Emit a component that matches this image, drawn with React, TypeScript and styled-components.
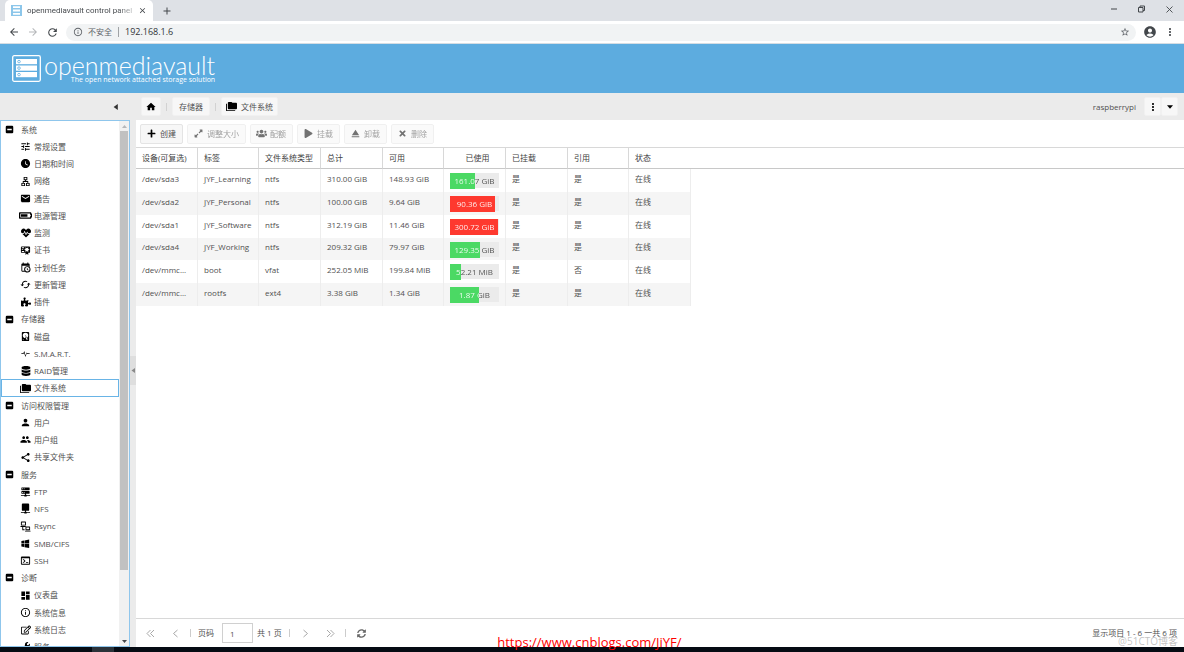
import React from 'react';
import styled, { createGlobalStyle } from 'styled-components';
import {
  MdTune, MdWatchLater, MdEmail, MdPerson, MdGroup, MdShare, MdDashboard,
  MdInfoOutline, MdAccountCircle, MdStarOutline, MdMoreVert, MdArrowBack, MdArrowForward,
  MdRefresh, MdEject, MdCached, MdClose, MdAdd, MdOutlineLan,
} from 'react-icons/md';
import {
  FaBatteryThreeQuarters, FaHeartbeat, FaDatabase, FaRegEdit, FaWrench, FaPlus,
  FaExpandAlt, FaUsers, FaPlay, FaTimes, FaSyncAlt, FaPuzzlePiece,
} from 'react-icons/fa';

const sans = `"Open Sans", "Noto Sans CJK SC", sans-serif`;
const blue = '#5dacdf';

const GlobalStyle = createGlobalStyle`
  * { box-sizing: border-box; }
  body { margin: 0; background: #fff; overflow: hidden; }
  body, button, input { font-family: ${sans}; font-size: 8px; line-height: 12px; color: #505050; }
  button { margin: 0; padding: 0; border: 0; background: none; }
  svg { display: block; flex: none; }
`;

const Page = styled.div`
  position: relative;
  display: flex;
  flex-direction: column;
  height: 100vh;
  overflow: hidden;
`;

/* Browser window */
const TabStrip = styled.div`
  display: flex;
  height: 21px;
  padding-left: 5px;
  background: #dee1e6;
`;
const Tab = styled.div`
  display: flex;
  align-items: center;
  width: 148px;
  padding: 0 6px;
  gap: 5px;
  border-radius: 5px 5px 0 0;
  background: #fff;
`;
const TabTitle = styled.span`
  flex: 1;
  font-family: Roboto, sans-serif;
  white-space: nowrap;
  color: #45494d;
  mask-image: linear-gradient(90deg, #000 85%, rgba(0, 0, 0, 0.3));
`;
const IconButton = styled.button<{ $dim?: boolean }>`
  display: flex;
  align-items: center;
  justify-content: center;
  color: ${(p) => (p.$dim ? '#b5b7ba' : '#43474b')};
`;
const NewTab = styled(IconButton)`
  margin-left: 8px;
`;
const WindowButtons = styled.div`
  display: flex;
  gap: 19px;
  margin-left: auto;
  padding: 0 10px 3px 0;
`;
const AddressRow = styled.div`
  display: flex;
  align-items: center;
  height: 23px;
  gap: 7px;
  padding: 0 8px;
  background: #fff;
  border-bottom: 1px solid #d5dde3;
`;
const AddressBox = styled.div`
  display: flex;
  flex: 1;
  align-items: center;
  height: 17px;
  gap: 5px;
  padding: 0 6px 0 7px;
  border-radius: 9px;
  background: #f1f3f4;
  color: #5f6368;
`;
const Url = styled.input`
  flex: 1;
  margin-left: 1px;
  padding: 0 0 0 6px;
  border: 0;
  border-left: 1px solid #a0a3a6;
  background: none;
  font-size: 9px;
  line-height: 10px;
  color: #303437;
`;

/* Banner */
const Banner = styled.header`
  display: flex;
  align-items: center;
  gap: 3px;
  height: 49px;
  padding: 0 12px;
  background: ${blue};
  color: #fff;
`;
const Brand = styled.div`
  display: flex;
  flex-direction: column;
  align-items: flex-end;
`;
const BrandName = styled.span`
  font: 300 25px/22px Lato, sans-serif;
`;
const Tagline = styled.span`
  font: 7px/8px "Open Sans", sans-serif;
`;

/* Breadcrumb bar */
const CrumbBar = styled.nav`
  display: flex;
  align-items: center;
  height: 27px;
  padding-right: 6px;
  background: #ebebeb;
`;
const NavHead = styled.div`
  display: flex;
  align-items: center;
  justify-content: flex-end;
  width: 141px;
  padding-right: 22px;
  color: #333;
`;
const Crumb = styled.button`
  display: flex;
  align-items: center;
  justify-content: center;
  gap: 4px;
  height: 19px;
  padding: 0 4px;
  border: 1px solid #f1f1f1;
  border-radius: 2px;
  background: #f7f7f7;
  svg { color: #000; }
`;
const TextCrumb = styled(Crumb)`
  padding: 0 6px;
`;
const MenuCrumb = styled(Crumb)`
  width: 17px;
  padding: 0;
`;
const Divider = styled.span`
  width: 1px;
  height: 8px;
  margin: 0 5px;
  background: #d2d2d2;
`;
const HostName = styled.span`
  margin: 0 8px 0 auto;
`;

/* Body */
const Body = styled.div`
  display: flex;
  flex: 1;
  min-height: 0;
`;
const Sidebar = styled.aside`
  display: flex;
  flex: none;
  width: 130px;
  border: 1px solid #8fc6ec;
  background: #fff;
`;
const Tree = styled.ul`
  flex: 1;
  margin: 0;
  padding: 0;
  overflow: hidden;
  list-style: none;
`;
const TreeRow = styled.li<{ $group?: boolean; $selected?: boolean }>`
  display: flex;
  align-items: center;
  height: 17px;
  gap: ${(p) => (p.$group ? 7 : 3)}px;
  padding-left: ${(p) => (p.$group ? 4 : 19)}px;
  outline: ${(p) => (p.$selected ? '1px solid #69b4e6' : 'none')};
  outline-offset: -1px;
  color: #000;
  &:nth-child(4n) { height: 18px; }
`;
const TreeIcon = styled.span`
  display: flex;
  justify-content: center;
  width: 11px;
`;
const GroupIcon = styled(TreeIcon)`
  width: 9px;
`;
const TreeLink = styled.a`
  color: #505050;
  text-decoration: none;
  white-space: nowrap;
`;
const Scrollbar = styled.div`
  display: flex;
  flex-direction: column;
  align-items: center;
  width: 10px;
  background: #f1f1f1;
  color: #505050;
`;
const Thumb = styled.div`
  flex: 1;
  width: 8px;
  background: #c1c1c1;
`;
const TrackEnd = styled.div`
  flex: 0 0 66px;
`;
const ScrollButton = styled(IconButton)`
  height: 10px;
`;
const Splitter = styled.div`
  display: flex;
  align-items: center;
  flex: none;
  width: 6px;
  padding-bottom: 26px;
  background: #ebebeb;
`;
const Collapse = styled.button`
  display: flex;
  align-items: center;
  justify-content: center;
  width: 6px;
  height: 29px;
  background: #dedede;
  color: #888;
`;
const Main = styled.main`
  display: flex;
  flex: 1;
  flex-direction: column;
  min-width: 0;
  background: #fff;
`;
const Toolbar = styled.div`
  display: flex;
  align-items: center;
  gap: 4px;
  height: 27px;
  padding: 0 4px;
`;
const ToolButton = styled.button`
  display: flex;
  align-items: center;
  gap: 4px;
  height: 20px;
  padding: 0 6px 0 5px;
  border: 1px solid #e4e4e4;
  border-radius: 2px;
  background: #f7f7f7;
  color: #505050;
  svg { color: #000; }
  &:disabled { opacity: 0.55; }
`;
const ToolIcon = styled.span`
  display: flex;
  justify-content: center;
  width: 10px;
`;

/* Grid */
const Grid = styled.table`
  width: 100%;
  table-layout: fixed;
  border-collapse: separate;
  border-spacing: 0;
`;
const Col = styled.col<{ $w?: number }>`
  width: ${(p) => (p.$w ? `${p.$w}px` : 'auto')};
`;
const HeadCell = styled.th<{ $center?: boolean }>`
  height: 22px;
  padding: 0 0 0 6px;
  border-top: 1px solid #d8d8d8;
  border-bottom: 1px solid #c8c8c8;
  border-right: 1px solid #d8d8d8;
  font-weight: 400;
  text-align: ${(p) => (p.$center ? 'center' : 'left')};
  white-space: nowrap;
  color: #404040;
  &:nth-last-child(-n + 2) { border-right: 0; }
`;
const Row = styled.tr`
  height: 23px;
  &:nth-child(4n) { height: 22px; }
  &:nth-child(even) td:not(:last-child) { background: #f5f5f5; }
`;
const Cell = styled.td`
  padding: 0 0 4px 6px;
  border-right: 1px solid #ededed;
  overflow: hidden;
  white-space: nowrap;
  text-overflow: ellipsis;
  &:last-child { border-right: 0; }
`;
const BarCell = styled(Cell)`
  padding: 0 6px;
`;
const Bar = styled.div`
  display: grid;
  height: 15px;
  background: #ebebeb;
`;
const Fill = styled.div<{ $full: boolean }>`
  grid-area: 1 / 1;
  background: ${(p) => (p.$full ? '#fe392f' : '#4bd964')};
`;
const BarText = styled.span`
  grid-area: 1 / 1;
  line-height: 16px;
  text-align: center;
  color: transparent;
  background-clip: text;
`;

/* Pager */
const Pager = styled.footer`
  display: flex;
  align-items: center;
  height: 29px;
  margin-top: auto;
  padding: 0 7px 0 6px;
  border-top: 1px solid #d8d8d8;
  color: #505050;
`;
const PageButton = styled(IconButton)`
  width: 17px;
  height: 17px;
  margin-right: 8px;
  color: #a8a8a8;
`;
const PageDivider = styled.span`
  width: 1px;
  height: 8px;
  margin: 0 7px 0 -2px;
  background: #ccc;
`;
const PageLabel = styled.label`
  display: flex;
  align-items: center;
  gap: 8px;
`;
const PageInput = styled.input`
  width: 31px;
  height: 20px;
  padding: 0 7px;
  border: 1px solid #d0d0d0;
`;
const PageTotal = styled.span`
  margin: 0 9px 0 4px;
`;
const Summary = styled.span`
  margin-left: auto;
`;
const Taskbar = styled.div`
  display: flex;
  flex: none;
  height: 5px;
  padding-left: 92px;
  background: #050b13;
`;
const ActiveTask = styled.span`
  width: 22px;
  background: #2b3239;
`;
const SourceLink = styled.a`
  position: absolute;
  bottom: 2px;
  left: 42%;
  font-size: 13px;
  line-height: 16px;
  color: #f00;
  text-decoration: none;
`;
const Watermark = styled.span`
  position: absolute;
  right: 6px;
  bottom: 4px;
  font-size: 10px;
  line-height: 14px;
  color: rgba(120, 120, 120, 0.45);
`;

const Glyph = ({ d, size = 11 }: { d: string; size?: number }) => (
  <svg width={size} height={size} viewBox="0 0 24 24" fill="currentColor" aria-hidden="true">
    <path fillRule="evenodd" d={d} />
  </svg>
);

const paths = {
  folders: 'M22,4H14L12,2H6A2,2 0 0,0 4,4V16A2,2 0 0,0 6,18H22A2,2 0 0,0 24,16V6A2,2 0 0,0 22,4M2,6H0V20A2,2 0 0,0 2,22H20V20H2V6Z',
  serverNet: 'M13,19H14A1,1 0 0,1 15,20H22V22H15A1,1 0 0,1 14,23H10A1,1 0 0,1 9,22H2V20H9A1,1 0 0,1 10,19H11V17H4A1,1 0 0,1 3,16V12A1,1 0 0,1 4,11H20A1,1 0 0,1 21,12V16A1,1 0 0,1 20,17H13V19M4,3H20A1,1 0 0,1 21,4V8A1,1 0 0,1 20,9H4A1,1 0 0,1 3,8V4A1,1 0 0,1 4,3M9,7H10V5H9V7M9,15H10V13H9V15M5,5V7H7V5H5M5,13V15H7V13H5Z',
  driveNet: 'M6,1H18A2,2 0 0,1 20,3V15A2,2 0 0,1 18,17H13V19H14A1,1 0 0,1 15,20H22V22H15A1,1 0 0,1 14,23H10A1,1 0 0,1 9,22H2V20H9A1,1 0 0,1 10,19H11V17H6A2,2 0 0,1 4,15V3A2,2 0 0,1 6,1Z',
  calendar: 'M15,13H16.5V15.82L18.94,17.23L18.19,18.53L15,16.69V13M19,8H5V19H9.67C9.24,18.09 9,17.07 9,16A7,7 0 0,1 16,9C17.07,9 18.09,9.24 19,9.67V8M5,21C3.89,21 3,20.1 3,19V5C3,3.89 3.89,3 5,3H6V1H8V3H16V1H18V3H19A2,2 0 0,1 21,5V11.1C22.24,12.36 23,14.09 23,16A7,7 0 0,1 16,23C14.09,23 12.36,22.24 11.1,21H5M16,11.15A4.85,4.85 0 0,0 11.15,16C11.15,18.68 13.32,20.85 16,20.85A4.85,4.85 0 0,0 20.85,16C20.85,13.32 18.68,11.15 16,11.15Z',
  certificate: 'M4,3C2.89,3 2,3.89 2,5V15A2,2 0 0,0 4,17H12V22L15,19L18,22V17H20A2,2 0 0,0 22,15V5A2,2 0 0,0 20,3H4M12,5L15,7L18,5V8.5L21,10L18,11.5V15L15,13L12,15V11.5L9,10L12,8.5V5M4,5H9V7H4V5M4,9H7V11H4V9M4,13H9V15H4V13Z',
  disk: 'M6,2H18A2,2 0 0,1 20,4V20A2,2 0 0,1 18,22H6A2,2 0 0,1 4,20V4A2,2 0 0,1 6,2M12,4A6,6 0 0,0 6,10C6,13.31 8.69,16 12.1,16L11.22,13.77C10.95,13.29 11.11,12.68 11.59,12.4L12.45,11.9C12.93,11.63 13.54,11.79 13.82,12.27L15.74,14.69C17.12,13.59 18,11.9 18,10A6,6 0 0,0 12,4M12,9A1,1 0 0,1 13,10A1,1 0 0,1 12,11A1,1 0 0,1 11,10A1,1 0 0,1 12,9M7,18A1,1 0 0,0 6,19A1,1 0 0,0 7,20A1,1 0 0,0 8,19A1,1 0 0,0 7,18M12.09,13.27L14.58,19.58L17.17,18.08L12.95,12.77L12.09,13.27Z',
  console: 'M20,19V7H4V19H20M20,3A2,2 0 0,1 22,5V19A2,2 0 0,1 20,21H4A2,2 0 0,1 2,19V5C2,3.89 2.9,3 4,3H20M13,17V15H18V17H13M9.58,13L5.57,9H8.4L11.7,12.3C12.09,12.69 12.09,13.33 11.7,13.71L8.42,17H5.59L9.58,13Z',
  windows: 'M3,12V6.75L9,5.43V11.91L3,12M20,3V11.75L10,11.9V5.21L20,3M3,13L9,13.09V19.9L3,18.75V13M20,13.25V22L10,20.09V13.1L20,13.25Z',
  computers: 'M3,1H12A1,1 0 0,1 13,2V9A1,1 0 0,1 12,10H3A1,1 0 0,1 2,9V2A1,1 0 0,1 3,1M4,3V8H11V3H4M1,11H14V13H7V18H10V20H5V13H1V11M13,12H21A1,1 0 0,1 22,13V19A1,1 0 0,1 21,20H13A1,1 0 0,1 12,19V13A1,1 0 0,1 13,12M14,14V18H20V14H14M11,21H23V23H11V21Z',
  home: 'M10,20V14H14V20H20V12H23L12,2L1,12H4V20H10Z',
  pulse: 'M1,11H6L9,5L12,17L15,9L17,11H23V13H16L15,12L12,21L8,10L7,13H1Z',
  minus: 'M5,2H19A3,3 0 0,1 22,5V19A3,3 0 0,1 19,22H5A3,3 0 0,1 2,19V5A3,3 0 0,1 5,2M6,10V14H18V10H6Z',
};

const Triangle = ({ dir, size = 5 }: { dir: 'left' | 'up' | 'down'; size?: number }) => (
  <svg width={size} height={size} viewBox="0 0 10 10" fill="currentColor" aria-hidden="true">
    <path d={{ left: 'M8 0V10L1 5Z', up: 'M0 8H10L5 2Z', down: 'M0 2H10L5 8Z' }[dir]} />
  </svg>
);

const Chevron = ({ dir, double }: { dir: 'left' | 'right'; double?: boolean }) => (
  <svg width="9" height="9" viewBox="0 0 18 18" fill="none" stroke="currentColor" strokeWidth="2" aria-hidden="true">
    <g transform={dir === 'right' ? 'rotate(180 9 9)' : undefined}>
      {double ? <path d="M9 2L2 9L9 16M16 2L9 9L16 16" /> : <path d="M13 2L5 9L13 16" />}
    </g>
  </svg>
);

const Logo = () => (
  <svg width="29" height="27" viewBox="0 0 29 27" fill="none" aria-hidden="true">
    <rect x="0.7" y="0.7" width="27.6" height="25.6" rx="1.5" stroke="#fff" strokeWidth="1.3" />
    {[4, 10.5, 17].map((y) => (
      <g key={y}>
        <rect x="4" y={y} width="21" height="5.2" fill="#fff" />
        <circle cx="7" cy={y + 2.6} r="1.3" fill="#fff" stroke="#5dacdf" strokeWidth="0.8" />
      </g>
    ))}
  </svg>
);

const Favicon = () => (
  <svg width="11" height="11" viewBox="0 0 11 11" aria-hidden="true">
    <rect width="11" height="11" fill="#8cc6ea" />
    <path d="M2 2.2H9M2 5.5H9M2 8.8H9" stroke="#fff" strokeWidth="1.8" />
  </svg>
);

type Entry = { label: string; icon?: React.ReactNode; selected?: boolean };
const g = (label: string): Entry => ({ label });
const i = (label: string, icon: React.ReactNode, selected = false): Entry => ({ label, icon, selected });

const tree: Entry[] = [
  g('系统'),
  i('常规设置', <MdTune size={11} />),
  i('日期和时间', <MdWatchLater size={11} />),
  i('网络', <MdOutlineLan size={11} />),
  i('通告', <MdEmail size={11} />),
  i('电源管理', <FaBatteryThreeQuarters size={13} />),
  i('监测', <FaHeartbeat size={10} />),
  i('证书', <Glyph d={paths.certificate} />),
  i('计划任务', <Glyph d={paths.calendar} />),
  i('更新管理', <MdCached size={11} />),
  i('插件', <FaPuzzlePiece size={10} />),
  g('存储器'),
  i('磁盘', <Glyph d={paths.disk} />),
  i('S.M.A.R.T.', <Glyph d={paths.pulse} size={9} />),
  i('RAID管理', <FaDatabase size={10} />),
  i('文件系统', <Glyph d={paths.folders} />, true),
  g('访问权限管理'),
  i('用户', <MdPerson size={11} />),
  i('用户组', <MdGroup size={11} />),
  i('共享文件夹', <MdShare size={11} />),
  g('服务'),
  i('FTP', <Glyph d={paths.serverNet} />),
  i('NFS', <Glyph d={paths.driveNet} />),
  i('Rsync', <Glyph d={paths.computers} />),
  i('SMB/CIFS', <Glyph d={paths.windows} />),
  i('SSH', <Glyph d={paths.console} />),
  g('诊断'),
  i('仪表盘', <MdDashboard size={11} />),
  i('系统信息', <MdInfoOutline size={11} />),
  i('系统日志', <FaRegEdit size={10} />),
  i('服务', <FaWrench size={9} />),
];

const tools = [
  { label: '创建', icon: <FaPlus size={9} /> },
  { label: '调整大小', icon: <FaExpandAlt size={9} /> },
  { label: '配额', icon: <FaUsers size={11} /> },
  { label: '挂载', icon: <FaPlay size={9} /> },
  { label: '卸载', icon: <MdEject size={13} /> },
  { label: '删除', icon: <FaTimes size={9} /> },
];

const headings = ['设备(可复选)', '标签', '文件系统类型', '总计', '可用', '已使用', '已挂载', '引用', '状态'];
const widths = [62, 61, 62, 62, 61, 62, 62, 61, 62];

const disks = [
  { dev: '/dev/sda3', label: 'JYF_Learning', type: 'ntfs', total: '310.00 GiB', free: '148.93 GiB', used: '161.07 GiB', pct: 52, ref: '是' },
  { dev: '/dev/sda2', label: 'JYF_Personal', type: 'ntfs', total: '100.00 GiB', free: '9.64 GiB', used: '90.36 GiB', pct: 91, ref: '是' },
  { dev: '/dev/sda1', label: 'JYF_Software', type: 'ntfs', total: '312.19 GiB', free: '11.46 GiB', used: '300.72 GiB', pct: 97, ref: '是' },
  { dev: '/dev/sda4', label: 'JYF_Working', type: 'ntfs', total: '209.32 GiB', free: '79.97 GiB', used: '129.35 GiB', pct: 62, ref: '是' },
  { dev: '/dev/mmc...', label: 'boot', type: 'vfat', total: '252.05 MiB', free: '199.84 MiB', used: '52.21 MiB', pct: 22, ref: '否' },
  { dev: '/dev/mmc...', label: 'rootfs', type: 'ext4', total: '3.38 GiB', free: '1.34 GiB', used: '1.87 GiB', pct: 59, ref: '是' },
];

const UsageBar = ({ pct, text }: { pct: number; text: string }) => (
  <Bar>
    <Fill $full={pct > 85} style={{ width: `${pct}%` }} />
    <BarText style={{ backgroundImage: `linear-gradient(90deg, #fff ${pct}%, #505050 ${pct}%)` }}>{text}</BarText>
  </Bar>
);

export default function App() {
  return (
    <Page>
      <GlobalStyle />
      <TabStrip>
        <Tab>
          <Favicon />
          <TabTitle>openmediavault control panel</TabTitle>
          <IconButton aria-label="Close tab"><MdClose size={9} /></IconButton>
        </Tab>
        <NewTab aria-label="New tab"><MdAdd size={12} /></NewTab>
        <WindowButtons>
          <IconButton aria-label="Minimize">
            <svg width="8" height="8" viewBox="0 0 8 8"><path d="M1 4H7" stroke="currentColor" /></svg>
          </IconButton>
          <IconButton aria-label="Restore">
            <svg width="9" height="8" viewBox="0 0 9 8" fill="none" stroke="currentColor"><path d="M1.5 2.5H6V7H1.5ZM3 2.5V1H7.5V5.5H6" /></svg>
          </IconButton>
          <IconButton aria-label="Close">
            <svg width="9" height="9" viewBox="0 0 9 9"><path d="M1.5 1.5L7.5 7.5M7.5 1.5L1.5 7.5" stroke="currentColor" strokeWidth="0.9" /></svg>
          </IconButton>
        </WindowButtons>
      </TabStrip>
      <AddressRow>
        <IconButton aria-label="Back"><MdArrowBack size={12} /></IconButton>
        <IconButton aria-label="Forward" $dim><MdArrowForward size={12} /></IconButton>
        <IconButton aria-label="Reload"><MdRefresh size={13} /></IconButton>
        <AddressBox>
          <MdInfoOutline size={10} />
          <span>不安全</span>
          <Url aria-label="Address" defaultValue="192.168.1.6" />
          <MdStarOutline size={10} />
        </AddressBox>
        <IconButton aria-label="Profile"><MdAccountCircle size={14} /></IconButton>
        <IconButton aria-label="Menu"><MdMoreVert size={12} /></IconButton>
      </AddressRow>

      <Banner>
        <Logo />
        <Brand>
          <BrandName>openmediavault</BrandName>
          <Tagline>The open network attached storage solution</Tagline>
        </Brand>
      </Banner>

      <CrumbBar>
        <NavHead><Triangle dir="left" size={6} /></NavHead>
        <Crumb aria-label="Home"><Glyph d={paths.home} size={10} /></Crumb>
        <Divider />
        <TextCrumb>存储器</TextCrumb>
        <Divider />
        <Crumb><Glyph d={paths.folders} /><span>文件系统</span></Crumb>
        <HostName>raspberrypi</HostName>
        <MenuCrumb aria-label="Options"><MdMoreVert size={12} /></MenuCrumb>
        <MenuCrumb aria-label="More"><Triangle dir="down" size={6} /></MenuCrumb>
      </CrumbBar>

      <Body>
        <Sidebar>
          <Tree>
            {tree.map((e, n) => (
              <TreeRow key={n} $group={!e.icon} $selected={e.selected}>
                {e.icon ? <TreeIcon>{e.icon}</TreeIcon> : <GroupIcon><Glyph d={paths.minus} size={9} /></GroupIcon>}
                <TreeLink href="#">{e.label}</TreeLink>
              </TreeRow>
            ))}
          </Tree>
          <Scrollbar>
            <ScrollButton aria-label="Scroll up" $dim><Triangle dir="up" /></ScrollButton>
            <Thumb />
            <TrackEnd />
            <ScrollButton aria-label="Scroll down"><Triangle dir="down" /></ScrollButton>
          </Scrollbar>
        </Sidebar>
        <Splitter><Collapse aria-label="Collapse"><Triangle dir="left" /></Collapse></Splitter>
        <Main>
          <Toolbar>
            {tools.map((t, n) => (
              <ToolButton key={t.label} disabled={n > 0}>
                <ToolIcon>{t.icon}</ToolIcon>
                {t.label}
              </ToolButton>
            ))}
          </Toolbar>
          <Grid>
            <colgroup>
              {widths.map((w, n) => <Col key={n} $w={w} />)}
              <Col />
            </colgroup>
            <thead>
              <tr>
                {headings.map((h) => <HeadCell key={h} $center={h === '已使用'}>{h}</HeadCell>)}
                <HeadCell />
              </tr>
            </thead>
            <tbody>
              {disks.map((d) => (
                <Row key={d.label}>
                  <Cell>{d.dev}</Cell>
                  <Cell>{d.label}</Cell>
                  <Cell>{d.type}</Cell>
                  <Cell>{d.total}</Cell>
                  <Cell>{d.free}</Cell>
                  <BarCell><UsageBar pct={d.pct} text={d.used} /></BarCell>
                  <Cell>是</Cell>
                  <Cell>{d.ref}</Cell>
                  <Cell>在线</Cell>
                  <Cell />
                </Row>
              ))}
            </tbody>
          </Grid>
          <Pager>
            <PageButton aria-label="First page"><Chevron dir="left" double /></PageButton>
            <PageButton aria-label="Previous page"><Chevron dir="left" /></PageButton>
            <PageDivider />
            <PageLabel>页码<PageInput defaultValue="1" /></PageLabel>
            <PageTotal>共 1 页</PageTotal>
            <PageDivider />
            <PageButton aria-label="Next page"><Chevron dir="right" /></PageButton>
            <PageButton aria-label="Last page"><Chevron dir="right" double /></PageButton>
            <PageDivider />
            <PageButton aria-label="Refresh"><FaSyncAlt size={9} color="#666" /></PageButton>
            <Summary>显示项目 1 - 6 一共 6 项</Summary>
          </Pager>
        </Main>
      </Body>
      <Taskbar><ActiveTask /></Taskbar>
      <SourceLink href="https://www.cnblogs.com/JiYF/">https://www.cnblogs.com/JiYF/</SourceLink>
      <Watermark>@51CTO博客</Watermark>
    </Page>
  );
}
